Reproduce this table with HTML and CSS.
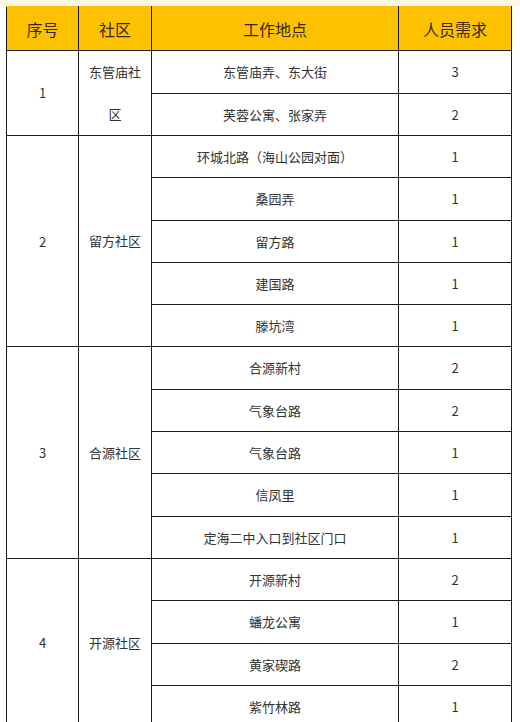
FILE: index.html
```html
<!DOCTYPE html>
<html lang="zh-CN">
<head>
<meta charset="utf-8">
<title>社区工作地点</title>
<link rel="stylesheet" href="styles.css">
</head>
<body>
<div class="page">
<table class="grid">
  <colgroup>
    <col class="c-no"><col class="c-comm"><col class="c-place"><col class="c-need">
  </colgroup>
  <thead>
    <tr><th>序号</th><th>社区</th><th>工作地点</th><th>人员需求</th></tr>
  </thead>
  <tbody>
    <tr><td rowspan="2">1</td><td rowspan="2" class="comm">东管庙社区</td><td>东管庙弄、东大街</td><td>3</td></tr>
    <tr><td>芙蓉公寓、张家弄</td><td>2</td></tr>
    <tr><td rowspan="5">2</td><td rowspan="5" class="comm">留方社区</td><td>环城北路（海山公园对面）</td><td>1</td></tr>
    <tr><td>桑园弄</td><td>1</td></tr>
    <tr><td>留方路</td><td>1</td></tr>
    <tr><td>建国路</td><td>1</td></tr>
    <tr><td>滕坑湾</td><td>1</td></tr>
    <tr><td rowspan="5">3</td><td rowspan="5" class="comm">合源社区</td><td>合源新村</td><td>2</td></tr>
    <tr><td>气象台路</td><td>2</td></tr>
    <tr><td>气象台路</td><td>1</td></tr>
    <tr><td>信凤里</td><td>1</td></tr>
    <tr><td>定海二中入口到社区门口</td><td>1</td></tr>
    <tr><td rowspan="4">4</td><td rowspan="4" class="comm">开源社区</td><td>开源新村</td><td>2</td></tr>
    <tr><td>蟠龙公寓</td><td>1</td></tr>
    <tr><td>黄家碶路</td><td>2</td></tr>
    <tr><td>紫竹林路</td><td>1</td></tr>
  </tbody>
</table>
</div>
</body>
</html>
```
FILE: styles.css
```css
html, body {
  margin: 0;
  padding: 0;
  background: #ffffff;
}
.page {
  padding: 6px 0 0 6px;
  background: linear-gradient(#fdf7e6 0, #fdf7e6 6px, #ffffff 6px);
  height: 722px;
  box-sizing: border-box;
  overflow: hidden;
}
.grid {
  border-collapse: collapse;
  table-layout: fixed;
  width: 505px;
  font-family: "Noto Sans CJK SC", "Noto Sans", sans-serif;
  color: #333333;
}
.c-no { width: 72px; }
.c-comm { width: 73px; }
.c-place { width: 247px; }
.c-need { width: 113px; }
.grid th {
  background: #fec100;
  color: #3b2a05;
  font-size: 16px;
  font-weight: normal;
  height: 43px;
  line-height: 20px;
  padding: 0;
  border: 1px solid #1a1a1a;
  border-top-color: #fec100;
  text-align: center;
}
.grid td {
  font-size: 13px;
  line-height: 41.3px;
  padding: 0;
  border: 1px solid #1a1a1a;
  text-align: center;
}
.grid td.comm {
  padding: 0 5px;
  line-height: 42px;
}
```
